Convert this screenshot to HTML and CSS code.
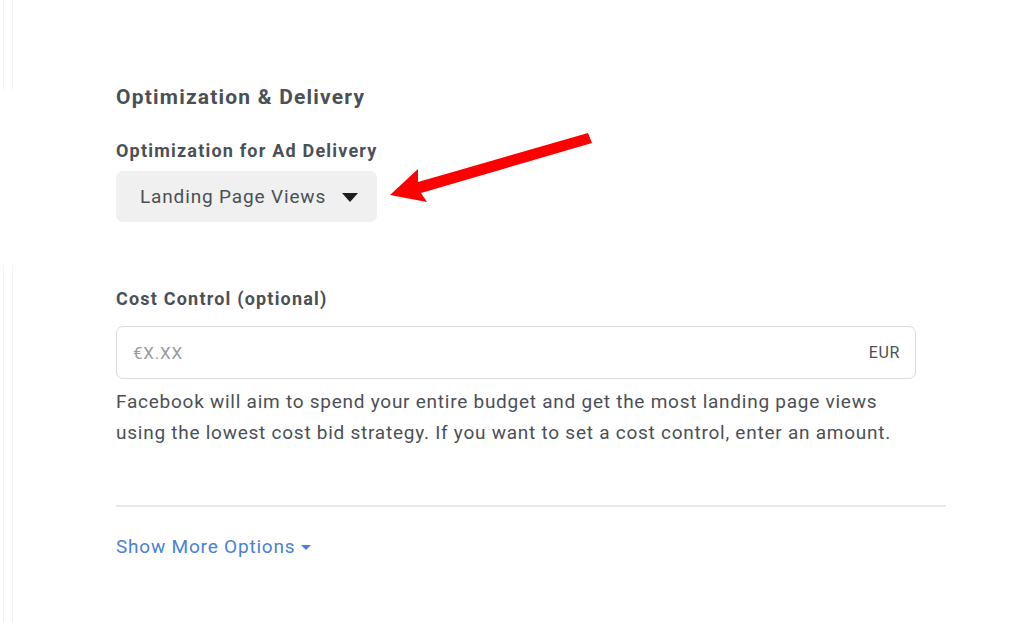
FILE: index.html
```html
<!DOCTYPE html>
<html>
<head>
<meta charset="utf-8">
<link rel="stylesheet" href="styles.css">
</head>
<body>
<div class="page">
  <div class="edge edge-top"></div>
  <div class="edge edge-bottom"></div>
  <section class="panel">
    <h2 class="title">Optimization &amp; Delivery</h2>
    <div class="label">Optimization for Ad Delivery</div>
    <div class="select-row">
      <button class="select">
        <span class="select-text">Landing Page Views</span>
        <svg class="caret" width="16" height="9" viewBox="0 0 16 9"><path d="M0 0H16L8 9Z" fill="#1c1e21"/></svg>
      </button>
    </div>
    <div class="label cost-label">Cost Control (optional)</div>
    <div class="input">
      <span class="placeholder">€X.XX</span>
      <span class="currency">EUR</span>
    </div>
    <p class="help">Facebook will aim to spend your entire budget and get the most landing page views<br>using the lowest cost bid strategy. If you want to set a cost control, enter an amount.</p>
    <hr class="divider">
    <a class="more">Show More Options <svg class="more-caret" width="10" height="5" viewBox="0 0 10 5"><path d="M0 0H10L5 5Z" fill="#4a80d9"/></svg></a>
  </section>
  <svg class="arrow" width="1024" height="622" viewBox="0 0 1024 622">
    <path d="M588 133 L592 143 L421 193 L427 202 L390 195 L418 169 L418 182 Z" fill="#ff0000"/>
  </svg>
</div>
</body>
</html>
```
FILE: styles.css
```css
html, body {
  margin: 0;
  padding: 0;
  background: #fff;
}
.page {
  position: relative;
  width: 1024px;
  height: 622px;
  overflow: hidden;
  font-family: Roboto, "Liberation Sans", Arial, sans-serif;
  color: #4b4f56;
}
.edge {
  position: absolute;
  left: 3px;
  width: 8px;
  border-left: 1px solid #f4f4f4;
  border-right: 1px solid #f4f4f4;
}
.edge-top { top: 0; height: 90px; }
.edge-bottom { top: 265px; height: 357px; }
.panel {
  padding: 82px 0 0 116px;
  width: 830px;
}
.title {
  margin: 0;
  font-size: 21px;
  font-weight: 700;
  letter-spacing: 1.2px;
  line-height: 30px;
  color: #4b4f56;
}
.label {
  margin-top: 28px;
  font-size: 18px;
  font-weight: 700;
  letter-spacing: 1.2px;
  line-height: 22px;
  color: #4b4f56;
}
.select-row {
  margin-top: 9px;
}
.select {
  display: inline-flex;
  align-items: center;
  justify-content: flex-start;
  gap: 16px;
  height: 51px;
  width: 261px;
  padding: 0 0 0 24px;
  box-sizing: border-box;
  background: #f0f0f0;
  border: none;
  border-radius: 7px;
  font-family: inherit;
  font-size: 19px;
  letter-spacing: 0.85px;
  color: #4b4f56;
  white-space: nowrap;
}
.select-text { white-space: nowrap; flex: none; }
.caret { margin-top: 1px; flex: none; }
.cost-label {
  margin-top: 66px;
}
.input {
  margin-top: 16px;
  height: 53px;
  width: 800px;
  box-sizing: border-box;
  border: 1px solid #dadde1;
  border-radius: 7px;
  display: flex;
  align-items: center;
  justify-content: space-between;
  padding: 0 15px 0 16px;
  font-size: 17px;
  letter-spacing: 0.8px;
}
.placeholder { color: #9a9a9a; }
.currency { color: #4b4f56; font-size: 16px; letter-spacing: 0.6px; }
.help {
  margin: 7px 0 0;
  font-size: 19px;
  letter-spacing: 0.75px;
  line-height: 31px;
  color: #4b4f56;
}
.divider {
  margin: 57px 0 0;
  border: none;
  height: 2px;
  background: #e4e6e9;
}
.more {
  display: inline-flex;
  align-items: center;
  gap: 6px;
  margin-top: 28px;
  font-size: 19px;
  letter-spacing: 0.8px;
  line-height: 24px;
  color: #4a80d9;
}
.arrow {
  position: absolute;
  left: 0;
  top: 0;
}
```
